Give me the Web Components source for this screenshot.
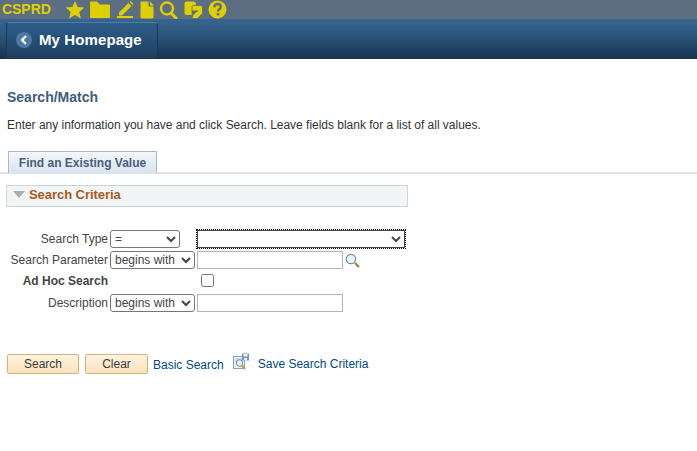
<!DOCTYPE html>
<html lang="en"><head><meta charset="utf-8"><title>Search/Match</title>
<style>html,body{margin:0;padding:0;background:#fff;overflow:hidden}body{width:697px;height:451px;font-family:"Liberation Sans",Arial,sans-serif}</style>
</head><body>
<cs-topbar label="CSPRD"></cs-topbar>
<cs-navbar label="My Homepage"></cs-navbar>
<cs-search-page></cs-search-page>
<script>
function def(name, html){
  customElements.define(name, class extends HTMLElement{
    constructor(){super();const r=this.attachShadow({mode:'open'});r.innerHTML=typeof html==='function'?html(this):html;}
  });
}
def('cs-topbar', el=>`<style>
:host{display:flex;align-items:center;height:19px;background:#5c6f82;font:bold 14px "Liberation Sans",Arial,sans-serif;color:#e0cf00;overflow:hidden}
.t{margin-left:2px;width:61px;letter-spacing:-.05px;line-height:19px}
svg{display:block;fill:#e0cf00;flex:none}
.i{display:flex;align-items:center;height:19px}
</style>
<span class="t">${el.getAttribute('label')}</span>
<div class="i">
<svg width="20" height="18" viewBox="0 0 20 18" style="margin-left:2px"><path d="M10 0l2.7 6 6.600.6-5 4.400 1.500 6.500L10 14l-5.800 3.500L5.700 11 .7 6.600 7.300 6z"/></svg>
<svg width="22" height="18" viewBox="0 0 22 18" style="margin-left:4px"><path d="M1 1.500Q1 .5 2 .5h6l3 3h9q1 0 1 1V16q0 1-1 1H2q-1 0-1-1z"/></svg>
<svg width="18" height="17" viewBox="0 0 18 17" style="margin-left:5px"><path d="M3 11.500L12.500 2l3 3L6 14.500H3zM13.500 1l1-1 3 3-1 1z"/><rect x="1" y="15" width="16" height="2"/></svg>
<svg width="14" height="18" viewBox="0 0 14 18" style="margin-left:6px"><path d="M1 .5h7.500v5h5V16q0 1.500-1.500 1.500H2Q.5 17.500.5 16V1.500Q.5.500 1 .5zM10 .5l4 4h-4z"/></svg>
<svg width="20" height="18" viewBox="0 0 20 18" style="margin-left:5px"><circle cx="8" cy="7.500" r="6" fill="none" stroke="#e0cf00" stroke-width="2.400"/><path d="M12 12l5 5" stroke="#e0cf00" stroke-width="3" stroke-linecap="round"/></svg>
<svg width="19" height="18" viewBox="0 0 19 18" style="margin-left:5px"><path d="M2.500.5h6.500q3 0 3 3V14H2.500Q.5 14 .5 12V2.500Q.5.500 2.500.5z"/><path d="M9.500 4.500h7.500q1.500 0 1.500 1.500v6.500L13.500 17.500H9.500q-1.500 0-1.500-1.500V6q0-1.500 1.500-1.500z" stroke="#5c6f82" stroke-width=".8"/><path d="M8 9.500h6.500L8 16.500z" fill="#5c6f82"/><path d="M9.500 15l4-4.200" stroke="#e0cf00" stroke-width="1.200"/></svg>
<svg width="19" height="19" viewBox="0 0 19 19" style="margin-left:5px"><circle cx="9.500" cy="9.500" r="9"/><path d="M6.300 7.300Q6.500 4 9.700 4q3.100 0 3.100 2.800 0 1.600-1.600 2.500-1.100.7-1.100 2v.3" fill="none" stroke="#5c6f82" stroke-width="2.300"/><rect x="8.800" y="13" width="2.500" height="2.400" fill="#5c6f82"/></svg>
</div>`);
def('cs-navbar', el=>`<style>
:host{display:flex;align-items:flex-start;height:40px;background:linear-gradient(#37658f,#2b5379 45%,#1c3c5a 85%,#17344f);box-sizing:border-box;padding-top:3px;padding-left:6px}
.b{display:flex;align-items:center;width:152px;height:35px;box-sizing:border-box;border:1px solid #1b3a58;border-top-color:#4f7ba3;border-radius:4px;background:linear-gradient(#2f5e8a,#1d4163);padding-left:9px;color:#fff;font:bold 15px "Liberation Sans",Arial,sans-serif;letter-spacing:.1px;box-shadow:0 1px 0 rgba(255,255,255,.08)}
.c{width:16px;height:16px;border-radius:50%;background:#4d7aa5;display:flex;align-items:center;justify-content:center;margin-right:7px}
svg{display:block}
</style><div class="b"><span class="c"><svg width="8" height="10" viewBox="0 0 8 10"><path d="M6 1L2 5l4 4" fill="none" stroke="#fff" stroke-width="2.200"/></svg></span><span>${el.getAttribute('label')}</span></div>`);
def('cs-tab', `<style>
:host{display:block;height:21px;border-bottom:2px solid #dde6f0;box-sizing:content-box}
.tab{display:inline-block;box-sizing:border-box;margin-left:8px;width:149px;height:22px;border:1px solid #a9b7c8;border-bottom:0;background:linear-gradient(#f4f7fb,#d8e3f0);color:#4a5f7a;font:bold 12px/22px "Liberation Sans",Arial,sans-serif;text-align:center;vertical-align:top;white-space:nowrap}
</style><span class="tab"><slot></slot></span>`);
def('cs-group', `<style>
:host{display:flex;align-items:center;box-sizing:border-box;margin-left:6px;width:402px;height:22px;padding-bottom:3px;background:#f2f5f6;border:1px solid #cdd5dc;color:#a85a1e;font:bold 13px "Liberation Sans",Arial,sans-serif;letter-spacing:-.05px}
i{display:block;width:0;height:0;border-style:solid;border-width:7px 6.500px 0;border-color:#a9aeb3 transparent transparent;margin:0 4px 0 6px}
</style><i></i><slot></slot>`);
def('cs-button', `<style>
:host{display:inline-flex;align-items:center;justify-content:center;box-sizing:border-box;height:20px;border:1px solid #dcae7f;border-radius:2px;background:linear-gradient(#fff4e0,#fbe2bd);color:#3b3b3b;font:12px "Liberation Sans",Arial,sans-serif}
</style><slot></slot>`);
def('cs-search-page', `<style>
:host{display:block;font:12px "Liberation Sans",Arial,sans-serif;color:#333}
h1{margin:30px 0 0 7px;font:bold 14px/17px "Liberation Sans",Arial,sans-serif;color:#3f5b80}
p{margin:12px 0 0 7px;line-height:15px;font-size:12px;letter-spacing:-.02px}
cs-tab{margin-top:18px}
cs-group{margin-top:11px}
form{display:grid;grid-template-columns:102px max-content;grid-template-rows:22px 20px 21px 24px;column-gap:2px;margin:21px 0 0 6px;font-size:12px;color:#444}
label{justify-self:end;align-self:center;white-space:nowrap;line-height:15px}
label.b{font-weight:bold;padding-top:1px}
.ctrl{display:flex;align-items:center}
select{box-sizing:border-box;height:18px;font:12px "Liberation Sans",Arial,sans-serif;color:#444;background:#fff;border:1px solid #767676;border-radius:3px;padding:0;margin:0}
select.op{width:85px}
select.sm{width:70px;margin-right:17px}
select.lg{width:208px;border-color:#444;border-radius:0;outline:1px dotted #000;outline-offset:0}
input[type=text]{box-sizing:border-box;width:146px;height:18px;margin:0 0 0 2px;border:1px solid #b4b4b4;padding:0 2px;background:#fff}
input[type=checkbox]{margin:0 0 0 91px;width:13px;height:13px}
svg{display:block}
.btns{display:flex;align-items:center;margin:39px 0 0 7px}
cs-button.s{width:72px}
cs-button.c{width:63px;margin-left:6px}
a{color:#004a85;text-decoration:none;font-size:12px;line-height:15px}
.bs{margin-left:5px;position:relative;top:1px}
.ic{margin-left:9px;margin-right:9px;position:relative;top:-3px}
</style>
<h1>Search/Match</h1>
<p>Enter any information you have and click Search. Leave fields blank for a list of all values.</p>
<cs-tab>Find an Existing Value</cs-tab>
<cs-group>Search Criteria</cs-group>
<form onsubmit="return false">
<label>Search Type</label>
<div class="ctrl"><select class="sm" aria-label="Search Type"><option>=</option><option>contains</option></select><select class="lg" aria-label="Value"><option></option></select></div>
<label>Search Parameter</label>
<div class="ctrl"><select class="op" aria-label="Search Parameter operator"><option>begins with</option></select><input type="text" aria-label="Search Parameter"><svg width="15" height="15" viewBox="0 0 15 15" style="margin-left:2px"><circle cx="6" cy="6" r="4.700" fill="#e6f4fc" stroke="#7c8a96" stroke-width="1.200"/><path d="M3.500 5Q4.500 3 6.500 3" fill="none" stroke="#fff"/><path d="M10 10l4 4" stroke="#8a8426" stroke-width="2"/></svg></div>
<label class="b">Ad Hoc Search</label>
<div class="ctrl"><input type="checkbox" aria-label="Ad Hoc Search"></div>
<label>Description</label>
<div class="ctrl"><select class="op" aria-label="Description operator"><option>begins with</option></select><input type="text" aria-label="Description"></div>
</form>
<div class="btns">
<cs-button class="s">Search</cs-button><cs-button class="c">Clear</cs-button>
<a class="bs" href="#">Basic Search</a>
<svg class="ic" width="16" height="17" viewBox="0 0 16 17"><rect x=".5" y="3.500" width="11" height="12" fill="#eef4fb" stroke="#7fa2d4"/><path d="M2 6h8M2 8h2" stroke="#a9c0e0"/><circle cx="6.500" cy="10" r="3.300" fill="#dff0fa" stroke="#7c8a96"/><path d="M9 12.500l3 3.500" stroke="#b8a52e" stroke-width="2"/><rect x="9" y=".5" width="7" height="7" fill="#6d93cc"/><rect x="10.500" y="1" width="4" height="2.500" fill="#fff"/><rect x="11" y="5" width="3" height="2.500" fill="#e8eff8"/></svg>
<a href="#">Save Search Criteria</a>
</div>`);
</script>
</body></html>
